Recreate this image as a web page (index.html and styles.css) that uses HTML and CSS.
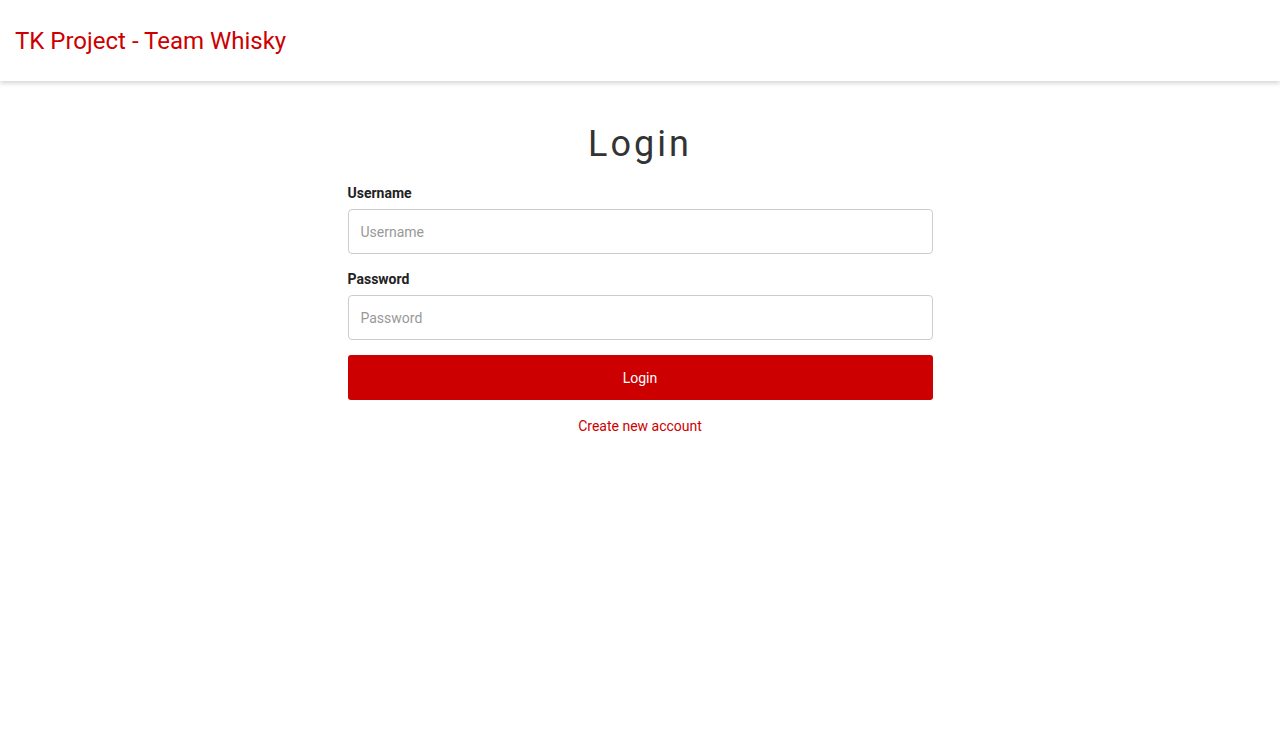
FILE: index.html
```html
<!DOCTYPE html>
<html lang="en">
<head>
<meta charset="utf-8">
<title>TK Project - Team Whisky</title>
<link rel="stylesheet" href="styles.css">
</head>
<body>
<header class="topbar">
  <a class="brand" href="#">TK Project - Team Whisky</a>
</header>
<main class="page">
  <form class="login">
    <h1 class="login-title">Login</h1>
    <label class="field-label" for="username">Username</label>
    <input class="field-input" id="username" type="text" placeholder="Username">
    <label class="field-label" for="password">Password</label>
    <input class="field-input" id="password" type="password" placeholder="Password">
    <button class="login-btn" type="button">Login</button>
    <a class="create-link" href="#">Create new account</a>
  </form>
</main>
</body>
</html>
```

FILE: styles.css
```css
* { box-sizing: border-box; }
html, body { margin: 0; padding: 0; background: #fff; }
body { font-family: Roboto, "Noto Sans", sans-serif; color: #333; }

.topbar {
  height: 81px;
  display: flex;
  align-items: center;
  padding: 0 15px;
  background: #fff;
  box-shadow: 0 2px 5px rgba(0,0,0,0.18);
}
.brand {
  color: #cc0000;
  font-size: 24px;
  text-decoration: none;
  line-height: 1;
}

.page {
  display: flex;
  justify-content: center;
  padding-top: 40px;
}
.login {
  width: 585px;
  display: flex;
  flex-direction: column;
}
.login-title {
  margin: 0 0 16px;
  text-align: center;
  font-weight: 400;
  font-size: 36px;
  letter-spacing: 3px;
  line-height: 46px;
  color: #333;
}
.field-label {
  font-size: 14px;
  font-weight: 700;
  color: #222;
  line-height: 20px;
  margin-bottom: 6px;
}
.field-input {
  height: 45px;
  border: 1px solid #ccc;
  border-radius: 4px;
  padding: 0 12px;
  font-family: inherit;
  font-size: 14px;
  color: #333;
  margin-bottom: 15px;
}
.field-input::placeholder { color: #999; }
.login-btn {
  height: 45px;
  border: none;
  border-radius: 3px;
  background: #cc0000;
  color: #fff;
  font-family: inherit;
  font-size: 14px;
}
.create-link {
  align-self: center;
  margin-top: 18px;
  color: #cc0000;
  font-size: 14px;
  text-decoration: none;
}
```
